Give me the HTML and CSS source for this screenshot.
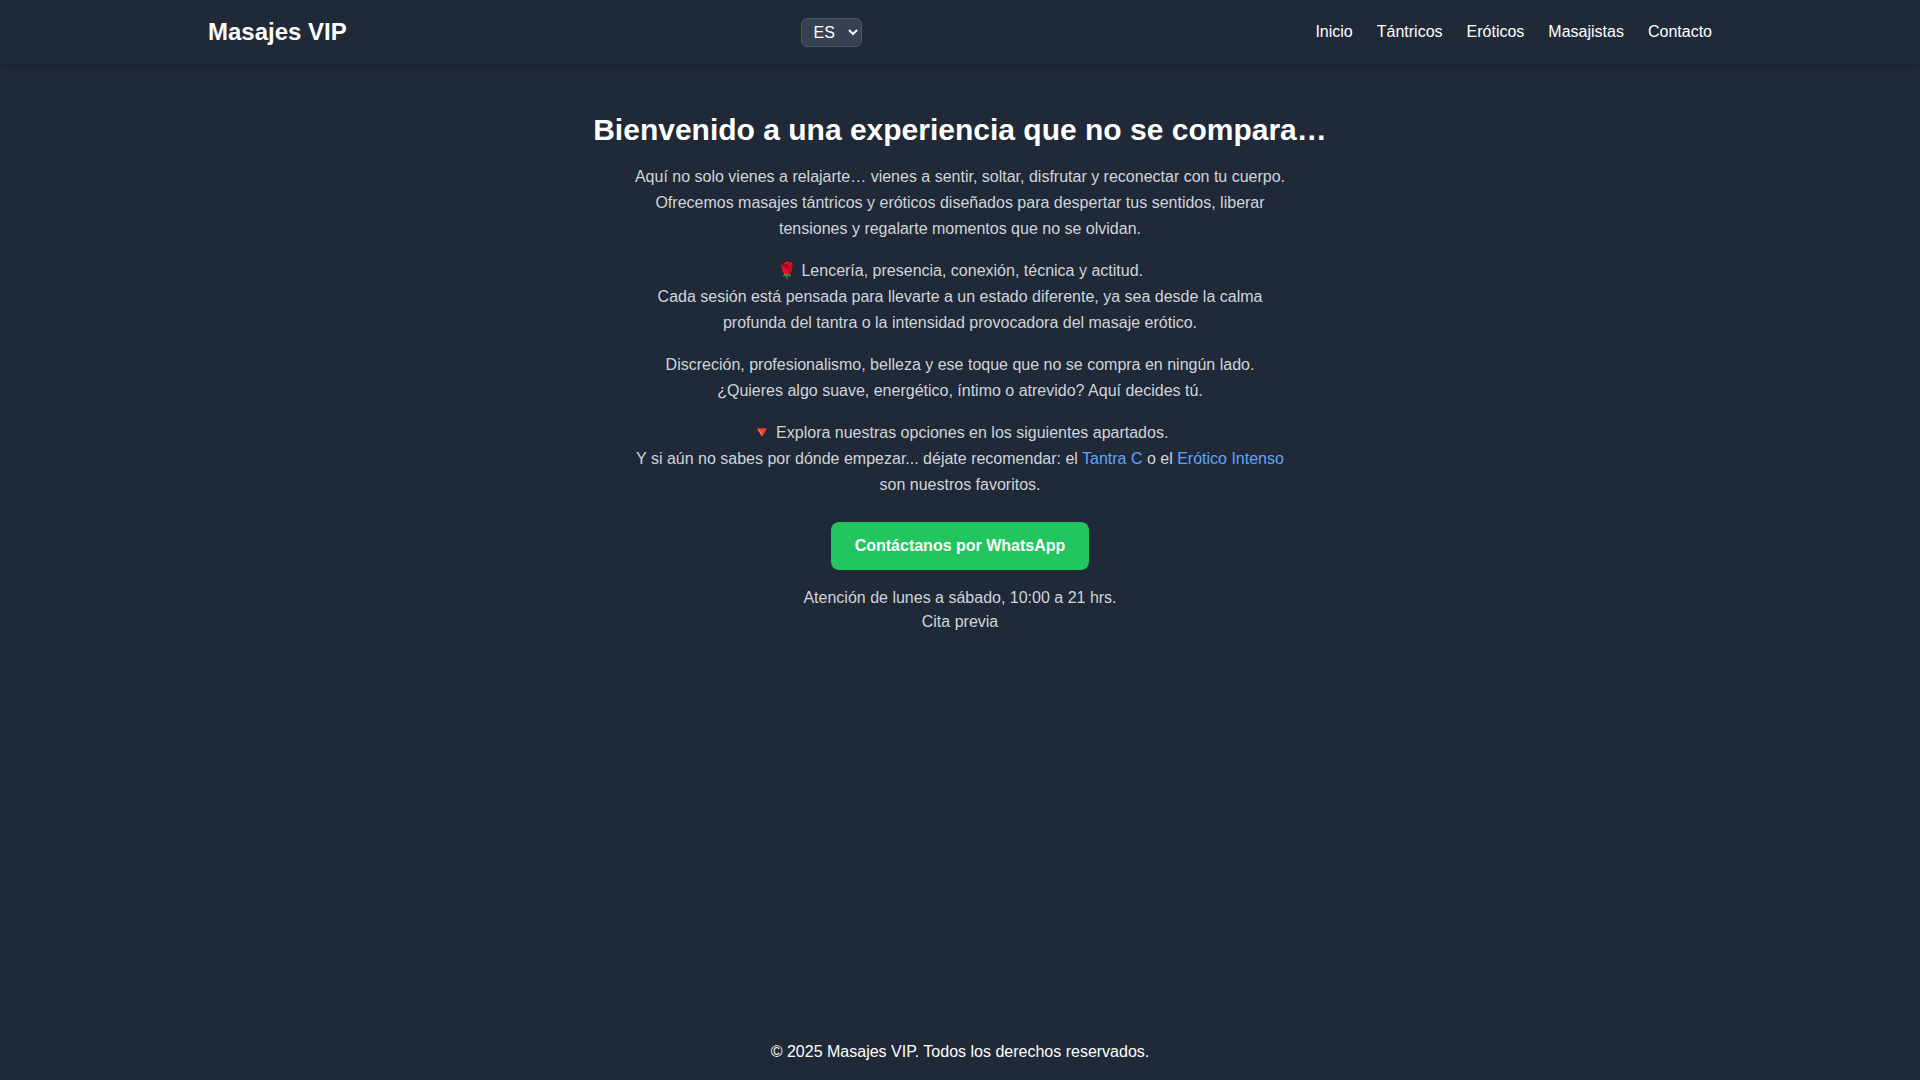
FILE: index.html
```html
<!DOCTYPE html>
<html lang="es">
<head>
<meta charset="utf-8">
<meta name="viewport" content="width=device-width, initial-scale=1">
<title>Masajes VIP</title>
<link rel="stylesheet" href="styles.css">
</head>
<body>
<header class="site-header">
  <div class="header-inner">
    <h1 class="brand">Masajes VIP</h1>
    <select class="lang" aria-label="Idioma"><option>ES</option><option>EN</option></select>
    <nav class="nav">
      <a href="#inicio">Inicio</a>
      <a href="#tantricos">Tántricos</a>
      <a href="#eroticos">Eróticos</a>
      <a href="#masajistas">Masajistas</a>
      <a href="#contacto">Contacto</a>
    </nav>
  </div>
</header>
<main class="main">
  <h2 class="title">Bienvenido a una experiencia que no se compara…</h2>
  <div class="intro">
    <p>Aquí no solo vienes a relajarte… vienes a sentir, soltar, disfrutar y reconectar con tu cuerpo. Ofrecemos masajes tántricos y eróticos diseñados para despertar tus sentidos, liberar tensiones y regalarte momentos que no se olvidan.</p>
    <p>🌹 Lencería, presencia, conexión, técnica y actitud.<br>Cada sesión está pensada para llevarte a un estado diferente, ya sea desde la calma profunda del tantra o la intensidad provocadora del masaje erótico.</p>
    <p>Discreción, profesionalismo, belleza y ese toque que no se compra en ningún lado.<br>¿Quieres algo suave, energético, íntimo o atrevido? Aquí decides tú.</p>
    <p>🔻 Explora nuestras opciones en los siguientes apartados.<br>Y si aún no sabes por dónde empezar... déjate recomendar: el <a href="#tantra-c">Tantra C</a> o el <a href="#erotico-intenso">Erótico Intenso</a> son nuestros favoritos.</p>
  </div>
  <a class="cta" href="#whatsapp">Contáctanos por WhatsApp</a>
  <p class="hours">Atención de lunes a sábado, 10:00 a 21 hrs.<br>Cita previa</p>
</main>
<footer class="footer">© 2025 Masajes VIP. Todos los derechos reservados.</footer>
</body>
</html>
```
FILE: styles.css
```css
*, *::before, *::after {
  box-sizing: border-box;
  margin: 0;
}
body {
  display: flex;
  flex-direction: column;
  min-height: 100vh;
  background: #1f2937;
  color: #fff;
  font: 16px/24px "Liberation Sans", Arial, sans-serif;
}
a {
  color: inherit;
  text-decoration: none;
}
.site-header {
  padding: 16px;
  box-shadow: 0 4px 6px -1px rgba(0, 0, 0, 0.1), 0 2px 4px -2px rgba(0, 0, 0, 0.1);
}
.header-inner {
  display: flex;
  align-items: center;
  justify-content: space-between;
  max-width: 1504px;
  margin: 0 auto;
}
.brand {
  font-size: 24px;
  line-height: 32px;
}
.lang {
  padding: 4px 8px;
  border: 1px solid #4b5563;
  border-radius: 6px;
  background: #374151;
  color: #fff;
  font: inherit;
}
.nav {
  display: flex;
  gap: 24px;
}
.main {
  flex: 1;
  display: flex;
  flex-direction: column;
  align-items: center;
  padding: 48px 16px;
  text-align: center;
}
.title {
  margin-bottom: 16px;
  font-size: 30px;
  line-height: 36px;
}
.intro {
  display: grid;
  gap: 16px;
  max-width: 672px;
  color: #d1d5db;
  line-height: 26px;
}
.intro a {
  color: #60a5fa;
}
.cta {
  margin: 24px 0 16px;
  padding: 12px 24px;
  border-radius: 8px;
  background: #22c55e;
  font-weight: 700;
}
.hours {
  color: #d1d5db;
}
.footer {
  padding: 16px;
  text-align: center;
}
```
